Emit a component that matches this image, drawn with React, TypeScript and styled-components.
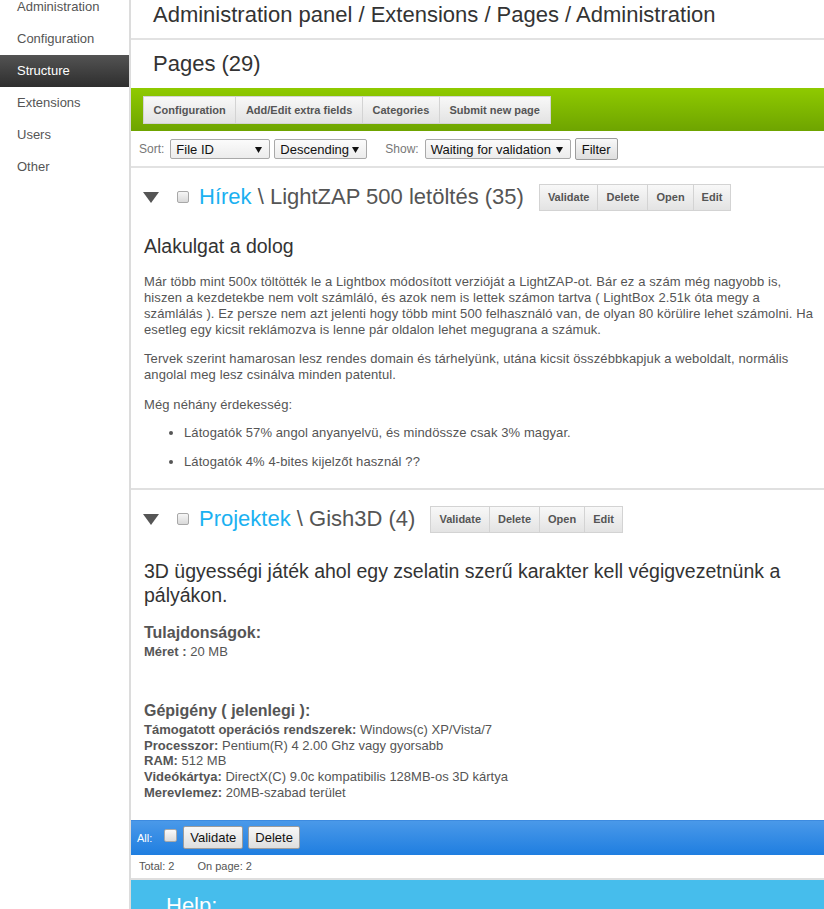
import React from 'react';
import styled, { createGlobalStyle } from 'styled-components';

const GlobalStyle = createGlobalStyle`
  html, body { margin: 0; padding: 0; background: #fff; }
  body { font-family: "Liberation Sans", Arial, Helvetica, sans-serif; color: #555; overflow: hidden; }
  * { box-sizing: border-box; }
`;

const Page = styled.div`
  display: flex;
  height: 909px;
  overflow: hidden;
`;

const Sidebar = styled.nav`
  width: 131px;
  flex: none;
  border-right: 2px solid #dcdcdc;
  background: #fff;
`;

const NavList = styled.ul`
  list-style: none;
  margin: -9px 0 0;
  padding: 0;
`;

const NavItem = styled.li<{ $active?: boolean }>`
  height: 32px;
  line-height: 32px;
  padding-left: 17px;
  font-size: 13px;
  color: ${(p) => (p.$active ? '#fff' : '#555')};
  background: ${(p) => (p.$active ? 'linear-gradient(#535353, #2e2e2e)' : 'transparent')};
`;

const Main = styled.main`
  flex: 1;
  min-width: 0;
  display: flex;
  flex-direction: column;
  & > * { flex-shrink: 0; }
`;

const Crumbs = styled.h1`
  margin: 0;
  height: 40px;
  padding: 2px 0 0 22px;
  font-size: 22px;
  font-weight: normal;
  line-height: 25px;
  color: #333;
  border-bottom: 2px solid #e2e2e2;
  white-space: nowrap;
`;

const PageTitle = styled.h2`
  margin: 0;
  height: 48px;
  padding: 11px 0 0 22px;
  font-size: 22px;
  font-weight: normal;
  line-height: 25px;
  color: #333;
`;

const GreenBar = styled.div`
  height: 43px;
  padding: 8px 12px 0;
  background: linear-gradient(#8fca00, #6ea400);
`;

const Group = styled.div`
  display: flex;
`;

const SegButton = styled.button<{ $h: number; $px: number }>`
  height: ${(p) => p.$h}px;
  padding: 0 ${(p) => p.$px}px;
  margin: 0 0 0 -1px;
  font-family: inherit;
  font-size: 11px;
  font-weight: bold;
  color: #555;
  border: 1px solid #d3d3d3;
  background: linear-gradient(#f8f8f8, #e3e3e3);
  white-space: nowrap;
  cursor: pointer;
  &:first-child { margin-left: 0; }
`;

const FilterRow = styled.div`
  height: 37px;
  display: flex;
  align-items: center;
  padding: 1px 0 0 8px;
  border-bottom: 2px solid #e2e2e2;
`;

const FieldLabel = styled.span<{ $ml?: number }>`
  font-size: 12px;
  color: #777;
  margin-left: ${(p) => p.$ml ?? 0}px;
  margin-right: 6px;
`;

const SelectBox = styled.div<{ $w: number; $mr?: number }>`
  width: ${(p) => p.$w}px;
  height: 20px;
  margin-right: ${(p) => p.$mr ?? 0}px;
  display: flex;
  align-items: center;
  justify-content: space-between;
  padding: 0 7px 0 5px;
  border: 1px solid #a9a9a9;
  border-radius: 2px;
  background: linear-gradient(#fbfbfb, #ececec);
  font-size: 13px;
  color: #111;
  white-space: nowrap;
`;

const PlainButton = styled.button<{ $h: number }>`
  height: ${(p) => p.$h}px;
  padding: 0 6px;
  font-family: inherit;
  font-size: 13px;
  color: #111;
  border: 1px solid #9c9c9c;
  border-radius: 2px;
  background: linear-gradient(#f8f8f8, #dedede);
  cursor: pointer;
`;

const Item = styled.section<{ $divider?: boolean }>`
  border-bottom: ${(p) => (p.$divider ? '2px solid #e0e0e0' : 'none')};
`;

const ItemHead = styled.div`
  display: flex;
  align-items: center;
  padding: 15px 12px 0;
`;

const Toggle = styled.svg`
  flex: none;
  margin-right: 18px;
`;

const Check = styled.input.attrs({ type: 'checkbox' })`
  appearance: none;
  -webkit-appearance: none;
  flex: none;
  margin: 0;
  width: 12px;
  height: 12px;
  border: 1px solid #a8a8a8;
  border-radius: 2px;
  background: linear-gradient(#f6f6f6, #d9d9d9);
`;

const ItemTitle = styled.h3`
  margin: 0 15px 0 10px;
  font-size: 22px;
  font-weight: normal;
  line-height: 28px;
  color: #555;
  white-space: nowrap;
`;

const CatLink = styled.a`
  color: #1bb1f1;
  text-decoration: none;
`;

const ItemBody = styled.div<{ $pb: number }>`
  padding: 0 8px ${(p) => p.$pb}px 13px;
`;

const Lead = styled.h4<{ $mt: number }>`
  margin: ${(p) => p.$mt}px 0 16px;
  font-size: 19.5px;
  font-weight: normal;
  line-height: 24px;
  color: #333;
`;

const Para = styled.p<{ $mt?: number }>`
  margin: ${(p) => p.$mt ?? 0}px 0 0;
  font-size: 13px;
  line-height: 16px;
  letter-spacing: 0.1px;
  color: #555;
`;

const Bullets = styled.ul`
  margin: 12px 0 0;
  padding-left: 40px;
  font-size: 13px;
  line-height: 16px;
  letter-spacing: 0.1px;
  color: #555;
  li + li { margin-top: 13px; }
`;

const SpecTitle = styled.h5<{ $mt: number }>`
  margin: ${(p) => p.$mt}px 0 2px;
  font-size: 16px;
  line-height: 19px;
  font-weight: bold;
  color: #555;
`;

const SpecLines = styled.div`
  font-size: 13px;
  line-height: 15.75px;
  color: #555;
  b { font-weight: bold; }
`;

const BulkBar = styled.div`
  height: 35px;
  display: flex;
  align-items: center;
  padding-left: 6px;
  background: linear-gradient(#4a99e9, #1f7ee0);
  border-top: 1px solid #3d8be0;
`;

const BulkLabel = styled.span`
  font-size: 11px;
  color: #fff;
  margin-right: 12px;
`;

const BulkCheck = styled(Check)`
  width: 13px;
  height: 13px;
  align-self: flex-start;
  margin: 8px 6px 0 0;
  background: linear-gradient(#fafafa, #dcdcdc);
`;

const Gap = styled.span<{ $w: number }>`
  display: inline-block;
  width: ${(p) => p.$w}px;
`;

const Stats = styled.div`
  height: 25px;
  display: flex;
  align-items: center;
  padding-left: 8px;
  font-size: 11px;
  color: #555;
  border-bottom: 2px solid #dedede;
`;

const Help = styled.div`
  flex: 1 0 60px;
  background: #46bdec;
  padding: 13px 0 0 35px;
`;

const HelpTitle = styled.h2`
  margin: 0;
  font-size: 22px;
  font-weight: normal;
  line-height: 25px;
  color: #fff;
`;

const Arrow = () => (
  <svg width="7" height="7" viewBox="0 0 7 7" aria-hidden="true">
    <polygon points="0,1 7,1 3.5,7" fill="#111" />
  </svg>
);

const TriangleDown = () => (
  <Toggle width="16" height="11" viewBox="0 0 16 11" aria-hidden="true">
    <polygon points="0,0 16,0 8,11" fill="#555" />
  </Toggle>
);

const ItemButtons = () => (
  <Group>
    <SegButton $h={27} $px={8}>Validate</SegButton>
    <SegButton $h={27} $px={8}>Delete</SegButton>
    <SegButton $h={27} $px={8}>Open</SegButton>
    <SegButton $h={27} $px={8}>Edit</SegButton>
  </Group>
);

const navItems = ['Administration', 'Configuration', 'Structure', 'Extensions', 'Users', 'Other'];

export default function App() {
  return (
    <>
      <GlobalStyle />
      <Page>
        <Sidebar>
          <NavList>
            {navItems.map((n) => (
              <NavItem key={n} $active={n === 'Structure'}>
                {n}
              </NavItem>
            ))}
          </NavList>
        </Sidebar>
        <Main>
          <Crumbs>Administration panel / Extensions / Pages / Administration</Crumbs>
          <PageTitle>Pages (29)</PageTitle>
          <GreenBar>
            <Group>
              <SegButton $h={28} $px={9.6}>Configuration</SegButton>
              <SegButton $h={28} $px={9.6}>Add/Edit extra fields</SegButton>
              <SegButton $h={28} $px={9.6}>Categories</SegButton>
              <SegButton $h={28} $px={9.6}>Submit new page</SegButton>
            </Group>
          </GreenBar>
          <FilterRow>
            <FieldLabel>Sort:</FieldLabel>
            <SelectBox $w={100} $mr={4}>
              File ID <Arrow />
            </SelectBox>
            <SelectBox $w={93}>
              Descending <Arrow />
            </SelectBox>
            <FieldLabel $ml={18}>Show:</FieldLabel>
            <SelectBox $w={146} $mr={4}>
              Waiting for validation <Arrow />
            </SelectBox>
            <PlainButton $h={22}>Filter</PlainButton>
          </FilterRow>

          <Item $divider>
            <ItemHead>
              <TriangleDown />
              <Check />
              <ItemTitle>
                <CatLink href="#">Hírek</CatLink> \ LightZAP 500 letöltés (35)
              </ItemTitle>
              <ItemButtons />
            </ItemHead>
            <ItemBody $pb={18}>
              <Lead $mt={23}>Alakulgat a dolog</Lead>
              <Para>
                Már több mint 500x töltötték le a Lightbox módosított verzióját a LightZAP-ot. Bár ez a szám még
                nagyobb is, hiszen a kezdetekbe nem volt számláló, és azok nem is lettek számon tartva ( LightBox
                2.51k óta megy a számlálás ). Ez persze nem azt jelenti hogy több mint 500 felhasználó van, de olyan
                80 körülire lehet számolni. Ha esetleg egy kicsit reklámozva is lenne pár oldalon lehet megugrana a
                számuk.
              </Para>
              <Para $mt={13}>
                Tervek szerint hamarosan lesz rendes domain és tárhelyünk, utána kicsit összébbkapjuk a weboldalt,
                normális angolal meg lesz csinálva minden patentul.
              </Para>
              <Para $mt={14}>Még néhány érdekesség:</Para>
              <Bullets>
                <li>Látogatók 57% angol anyanyelvü, és mindössze csak 3% magyar.</li>
                <li>Látogatók 4% 4-bites kijelzőt használ ??</li>
              </Bullets>
            </ItemBody>
          </Item>

          <Item>
            <ItemHead>
              <TriangleDown />
              <Check />
              <ItemTitle>
                <CatLink href="#">Projektek</CatLink> \ Gish3D (4)
              </ItemTitle>
              <ItemButtons />
            </ItemHead>
            <ItemBody $pb={19}>
              <Lead $mt={26}>3D ügyességi játék ahol egy zselatin szerű karakter kell végigvezetnünk a pályákon.</Lead>
              <SpecTitle $mt={0}>Tulajdonságok:</SpecTitle>
              <SpecLines>
                <b>Méret :</b> 20 MB
              </SpecLines>
              <SpecTitle $mt={41}>Gépigény ( jelenlegi ):</SpecTitle>
              <SpecLines>
                <div>
                  <b>Támogatott operációs rendszerek:</b> Windows(c) XP/Vista/7
                </div>
                <div>
                  <b>Processzor:</b> Pentium(R) 4 2.00 Ghz vagy gyorsabb
                </div>
                <div>
                  <b>RAM:</b> 512 MB
                </div>
                <div>
                  <b>Videókártya:</b> DirectX(C) 9.0c kompatibilis 128MB-os 3D kártya
                </div>
                <div>
                  <b>Merevlemez:</b> 20MB-szabad terület
                </div>
              </SpecLines>
            </ItemBody>
          </Item>

          <BulkBar>
            <BulkLabel>All:</BulkLabel>
            <BulkCheck />
            <PlainButton $h={23}>Validate</PlainButton>
            <Gap $w={5} />
            <PlainButton $h={23}>Delete</PlainButton>
          </BulkBar>
          <Stats>
            Total: 2<Gap $w={23} />On page: 2
          </Stats>
          <Help>
            <HelpTitle>Help:</HelpTitle>
          </Help>
        </Main>
      </Page>
    </>
  );
}
